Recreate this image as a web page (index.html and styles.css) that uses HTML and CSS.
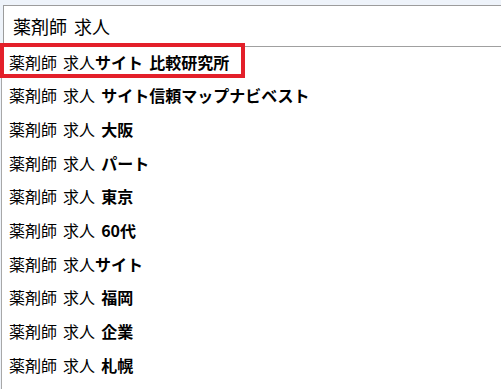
FILE: index.html
```html
<!DOCTYPE html>
<html lang="ja">
<head>
    <meta charset="UTF-8">
    <meta name="viewport" content="width=device-width, initial-scale=1.0">
    <title>薬剤師 求人</title>
    <link rel="stylesheet" href="styles.css">
</head>
<body>
    <div class="search">
        <div class="search-box">薬剤師 求人</div>
    </div>
    <ul class="suggest">
        <li class="suggest-item">薬剤師 求人<b>サイト 比較研究所</b></li>
        <li class="suggest-item">薬剤師 求人 <b>サイト信頼マップナビベスト</b></li>
        <li class="suggest-item">薬剤師 求人 <b>大阪</b></li>
        <li class="suggest-item">薬剤師 求人 <b>パート</b></li>
        <li class="suggest-item">薬剤師 求人 <b>東京</b></li>
        <li class="suggest-item">薬剤師 求人 <b>60代</b></li>
        <li class="suggest-item">薬剤師 求人<b>サイト</b></li>
        <li class="suggest-item">薬剤師 求人 <b>福岡</b></li>
        <li class="suggest-item">薬剤師 求人 <b>企業</b></li>
        <li class="suggest-item">薬剤師 求人 <b>札幌</b></li>
    </ul>
    <!-- annotation box drawn over the first suggestion -->
    <div class="highlight"></div>
</body>
</html>
```

FILE: styles.css
```css
* {
    margin: 0;
    padding: 0;
    box-sizing: border-box;
}

body {
    font-family: "Noto Sans CJK JP", "Noto Sans", sans-serif;
    background: #eef3fa;
    color: #000;
    height: 389px;
    overflow: hidden;
    position: relative;
    word-spacing: 2.5px;
}

.search {
    margin: 5px 0 0 3px;
    border-top: 1px solid #9c9c9c;
    border-left: 1px solid #9c9c9c;
    border-bottom: 1px solid #a0a0a0;
    background: #fff;
}

.search-box {
    height: 40px;
    display: flex;
    align-items: center;
    padding-left: 9px;
    font-size: 18px;
    word-spacing: 3px;
}

.suggest {
    list-style: none;
    margin-left: 1px;
    border-left: 1px solid #a8a8a8;
    background: #fff;
    height: 342px;
}

.suggest-item {
    height: 33.67px;
    display: flex;
    align-items: center;
    padding: 0 0 4px 7px;
    font-size: 16px;
    white-space: pre;
}

.suggest-item b {
    font-weight: 700;
}

.highlight {
    position: absolute;
    left: 0;
    top: 43px;
    width: 245px;
    height: 35px;
    border: 4px solid #e3202a;
}
```
